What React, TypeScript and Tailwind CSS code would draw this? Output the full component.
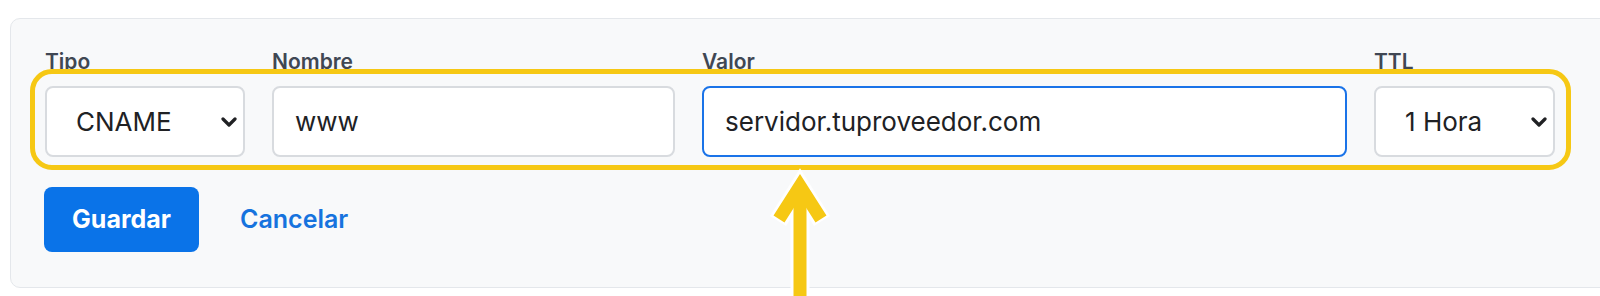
import React from 'react';

const font = { fontFamily: 'Inter, "Noto Sans", sans-serif' };

function Chevron() {
  return (
    <svg
      width="16"
      height="10"
      viewBox="0 0 16 10"
      className="pointer-events-none absolute right-[8px] top-1/2 -translate-y-1/2"
    >
      <path d="M2 2 L8 8 L14 2" fill="none" stroke="#202124" strokeWidth="3.2" strokeLinecap="round" strokeLinejoin="round" />
    </svg>
  );
}

function Field({ label, width, children }: { label: string; width: string; children: React.ReactNode }) {
  return (
    <div className={`flex flex-col ${width}`}>
      <label className="mb-[12px] text-[21px] font-semibold leading-[24px] text-[#404753]">{label}</label>
      {children}
    </div>
  );
}

function SelectBox({ value, options }: { value: string; options: string[] }) {
  return (
    <div className="relative h-[71px]">
      <select
        defaultValue={value}
        className="h-full w-full appearance-none rounded-[8px] border-2 border-[#d8dbdf] bg-white pl-[29px] pr-[30px] text-[26px] text-[#202124] outline-none"
      >
        {options.map((o) => (
          <option key={o}>{o}</option>
        ))}
      </select>
      <Chevron />
    </div>
  );
}

export default function App() {
  return (
    <div className="relative h-[296px] w-[1600px] overflow-hidden bg-white" style={font}>
      <div className="ml-[10px] mt-[18px] h-[270px] w-[1620px] rounded-[10px] border border-[#e4e7eb] bg-[#f8f9fa] pl-[34px] pt-[31px]">
        <div className="flex gap-[27px]">
          <Field label="Tipo" width="w-[200px]">
            <SelectBox value="CNAME" options={['A', 'AAAA', 'CNAME', 'MX', 'TXT']} />
          </Field>
          <Field label="Nombre" width="w-[403px]">
            <input
              defaultValue="www"
              className="h-[71px] rounded-[8px] border-2 border-[#d8dbdf] bg-white pl-[21px] text-[26px] text-[#202124] outline-none"
            />
          </Field>
          <Field label="Valor" width="w-[645px]">
            <input
              defaultValue="servidor.tuproveedor.com"
              className="h-[71px] rounded-[8px] border-2 border-[#1a73e8] bg-white pl-[21px] text-[26px] text-[#202124] outline-none"
            />
          </Field>
          <Field label="TTL" width="w-[181px]">
            <SelectBox value="1 Hora" options={['5 Minutos', '30 Minutos', '1 Hora', '1 Día']} />
          </Field>
        </div>
        <div className="mt-[30px] flex items-center gap-[41px]">
          <button className="h-[65px] w-[155px] -ml-px rounded-[8px] bg-[#0a73e8] text-[25px] font-bold text-white">
            Guardar
          </button>
          <button className="text-[25px] font-semibold text-[#1673de]">Cancelar</button>
        </div>
      </div>

      {/* annotation outline */}
      <div className="pointer-events-none absolute left-[30px] top-[69px] h-[101px] w-[1541px] rounded-[22px] border-[5px] border-[#f6c814]" />

      {/* annotation arrow */}
      <svg className="pointer-events-none absolute left-0 top-0" width="1600" height="296" viewBox="0 0 1600 296">
        <g fill="none" stroke="#ffffff" strokeWidth="19" strokeLinejoin="miter">
          <path d="M778 221 L800 186 L822 221" />
          <path d="M800 190 V300" />
        </g>
        <g fill="none" stroke="#f6c814" strokeWidth="13" strokeLinejoin="miter">
          <path d="M779 219 L800 186 L821 219" />
          <path d="M800 188 V300" />
        </g>
      </svg>
    </div>
  );
}
